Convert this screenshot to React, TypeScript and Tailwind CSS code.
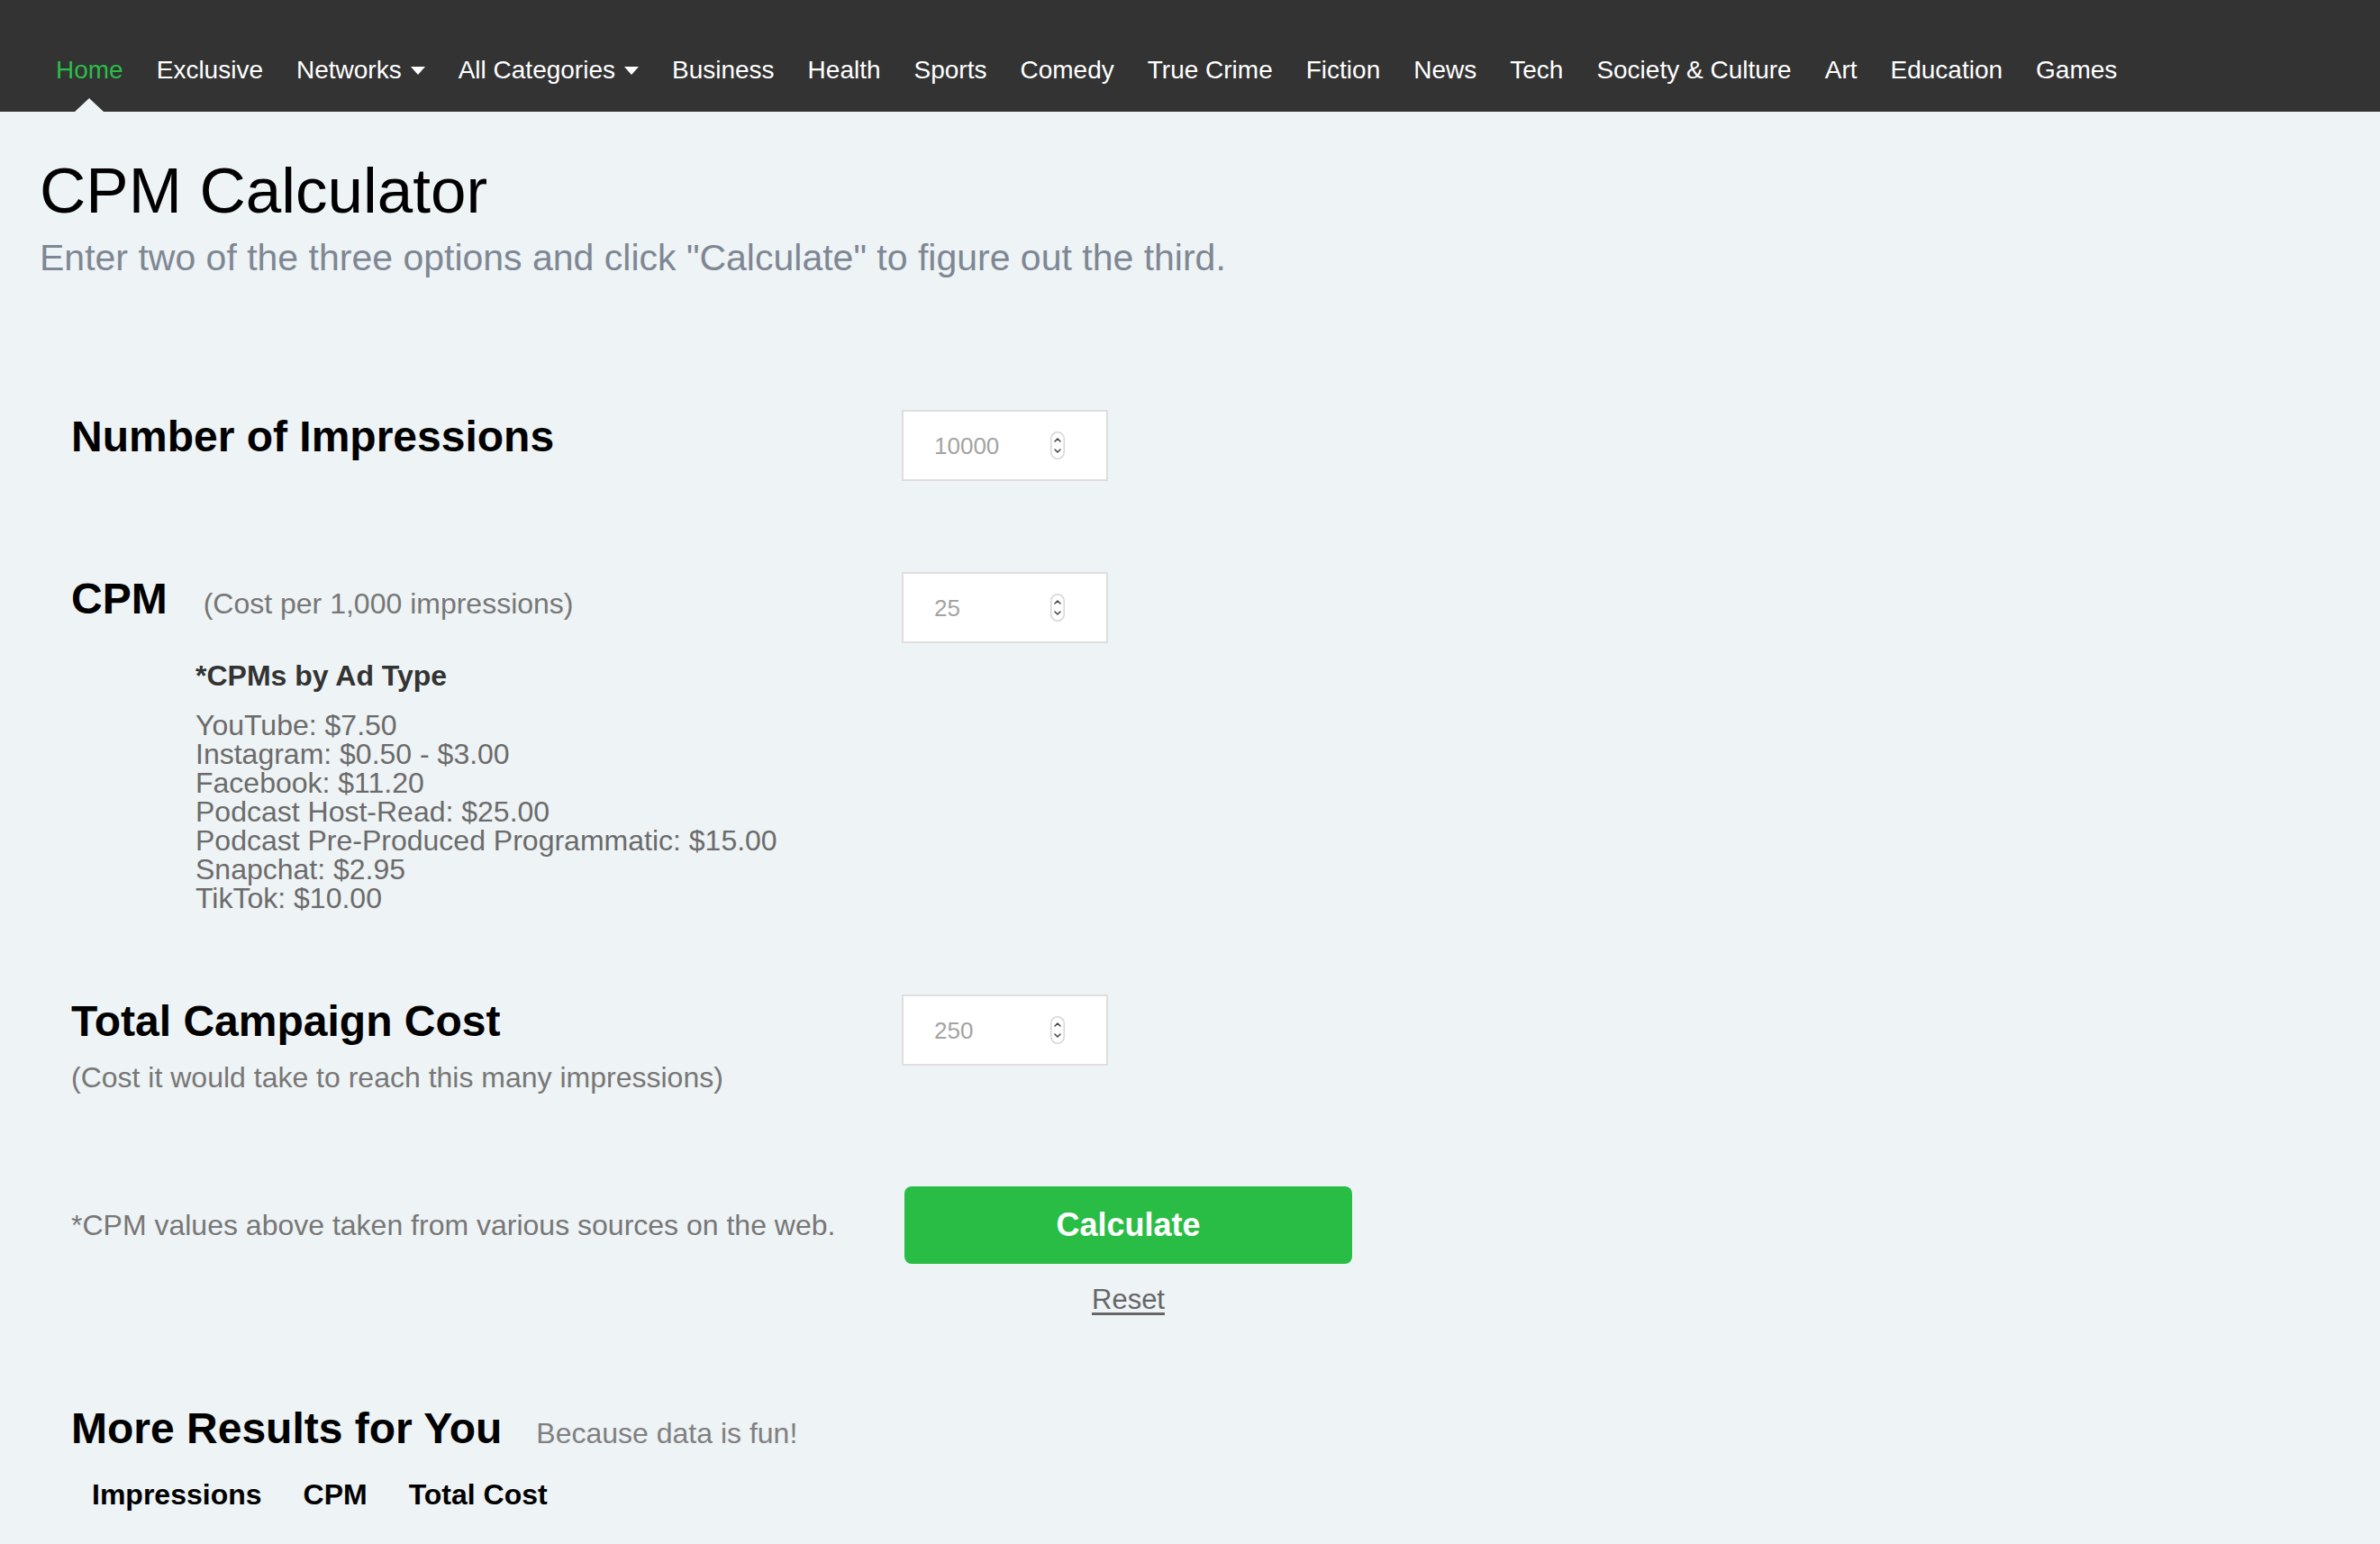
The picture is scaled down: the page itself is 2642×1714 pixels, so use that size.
import React from "react";

const navItems: { label: string; caret?: boolean; active?: boolean }[] = [
  { label: "Home", active: true },
  { label: "Exclusive" },
  { label: "Networks", caret: true },
  { label: "All Categories", caret: true },
  { label: "Business" },
  { label: "Health" },
  { label: "Sports" },
  { label: "Comedy" },
  { label: "True Crime" },
  { label: "Fiction" },
  { label: "News" },
  { label: "Tech" },
  { label: "Society & Culture" },
  { label: "Art" },
  { label: "Education" },
  { label: "Games" },
];

const adTypes = [
  "YouTube: $7.50",
  "Instagram: $0.50 - $3.00",
  "Facebook: $11.20",
  "Podcast Host-Read: $25.00",
  "Podcast Pre-Produced Programmatic: $15.00",
  "Snapchat: $2.95",
  "TikTok: $10.00",
];

function Caret() {
  return (
    <svg width="16" height="9" viewBox="0 0 16 9" className="ml-[10px]">
      <polygon points="0,0 16,0 8,9" fill="#ffffff" />
    </svg>
  );
}

function Spinner() {
  return (
    <svg width="16" height="31" viewBox="0 0 16 31">
      <rect x="0.75" y="0.75" width="14.5" height="29.5" rx="7.25" fill="#ffffff" stroke="#d6d6d6" strokeWidth="1.5" />
      <polyline points="5,11 8,8 11,11" fill="none" stroke="#444" strokeWidth="1.5" strokeLinecap="round" strokeLinejoin="round" />
      <polyline points="5,20 8,23 11,20" fill="none" stroke="#444" strokeWidth="1.5" strokeLinecap="round" strokeLinejoin="round" />
    </svg>
  );
}

function NumberBox({ value }: { value: string }) {
  return (
    <div className="w-[229px] h-[79px] shrink-0 border-2 border-[#dedede] bg-white flex items-center justify-between pl-[34px] pr-[46px]">
      <span className="text-[26px] leading-none text-[#a3a3a3]">{value}</span>
      <Spinner />
    </div>
  );
}

export default function App() {
  return (
    <div className="min-h-screen bg-[#eef3f5] font-['Liberation_Sans',Arial,sans-serif] pb-[20px]">
      <nav className="h-[124px] bg-[#333333] flex gap-[37px] pl-[62px] pt-[64px] text-[28px] leading-none text-white">
        {navItems.map((item) => (
          <span
            key={item.label}
            className={`relative inline-flex items-center h-[28px] whitespace-nowrap ${item.active ? "text-[#2bbd48]" : "text-white"}`}
          >
            {item.label}
            {item.caret && <Caret />}
            {item.active && (
              <span className="absolute left-1/2 -translate-x-1/2 top-[45px] w-0 h-0 border-l-[16px] border-r-[16px] border-b-[15px] border-l-transparent border-r-transparent border-b-[#eef3f5]" />
            )}
          </span>
        ))}
      </nav>

      <main className="pl-[44px]">
        <h1 className="mt-[52px] text-[71px] leading-none text-black font-normal">CPM Calculator</h1>
        <p className="mt-[19px] text-[41px] leading-none text-[#7e8794]">
          Enter two of the three options and click "Calculate" to figure out the third.
        </p>

        <div className="pl-[35px]">
          {/* Impressions */}
          <div className="mt-[148px] flex items-start">
            <div className="w-[922px] shrink-0">
              <h2 className="mt-[6px] text-[48px] leading-none font-bold text-black">Number of Impressions</h2>
            </div>
            <NumberBox value="10000" />
          </div>

          {/* CPM */}
          <div className="mt-[101px] flex items-start">
            <div className="w-[922px] shrink-0">
              <div className="mt-[6px] flex items-baseline">
                <h2 className="text-[48px] leading-none font-bold text-black">CPM</h2>
                <span className="ml-[40px] text-[32px] leading-none text-[#777777]">(Cost per 1,000 impressions)</span>
              </div>
              <div className="pl-[138px]">
                <h3 className="mt-[45px] text-[32px] leading-none font-bold text-[#333333]">*CPMs by Ad Type</h3>
                <ul className="mt-[23px] text-[32px] leading-[32px] text-[#6b6b6b]">
                  {adTypes.map((t) => (
                    <li key={t}>{t}</li>
                  ))}
                </ul>
              </div>
            </div>
            <NumberBox value="25" />
          </div>

          {/* Total campaign cost */}
          <div className="mt-[91px] flex items-start">
            <div className="w-[922px] shrink-0">
              <h2 className="mt-[6px] text-[48px] leading-none font-bold text-black">Total Campaign Cost</h2>
              <p className="mt-[22px] text-[32px] leading-none text-[#777777]">
                (Cost it would take to reach this many impressions)
              </p>
            </div>
            <NumberBox value="250" />
          </div>

          {/* Calculate */}
          <div className="mt-[105px] flex items-start">
            <div className="w-[922px] shrink-0 h-[86px] flex items-center">
              <p className="text-[32px] leading-none text-[#777777]">*CPM values above taken from various sources on the web.</p>
            </div>
            <div className="ml-[3px] w-[497px] flex flex-col items-center">
              <button className="w-[497px] h-[86px] rounded-[8px] bg-[#29bd45] text-white text-[36px] font-bold leading-none">
                Calculate
              </button>
              <a className="mt-[24px] text-[31px] leading-none text-[#666666] underline underline-offset-[4px]">Reset</a>
            </div>
          </div>

          {/* More results */}
          <div className="mt-[104px] flex items-baseline">
            <h2 className="text-[48px] leading-none font-bold text-black">More Results for You</h2>
            <span className="ml-[38px] text-[32px] leading-none text-[#808080]">Because data is fun!</span>
          </div>
          <table className="mt-[33px] border-collapse">
            <thead>
              <tr className="text-[32px] leading-none font-bold text-black">
                <th className="px-[23px] text-left font-bold">Impressions</th>
                <th className="px-[23px] text-left font-bold">CPM</th>
                <th className="px-[23px] text-left font-bold">Total Cost</th>
              </tr>
            </thead>
          </table>
        </div>
      </main>
    </div>
  );
}
